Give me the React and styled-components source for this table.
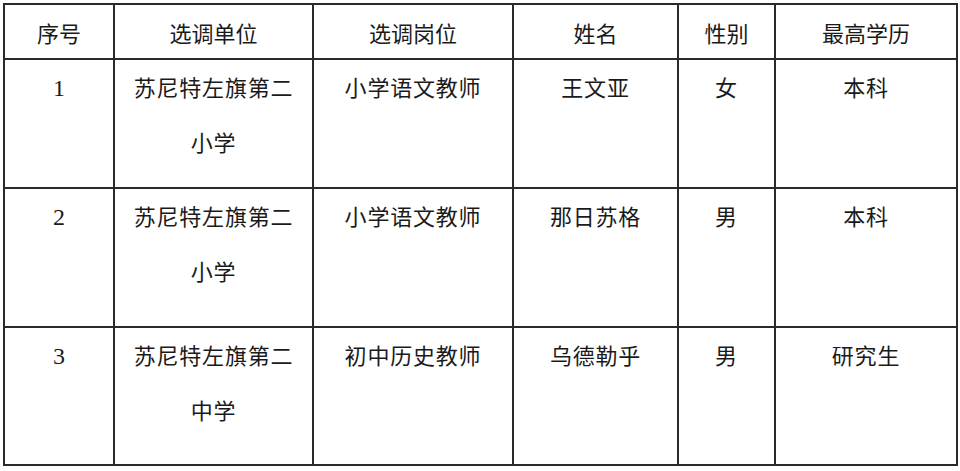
import React from 'react'
import styled, { createGlobalStyle } from 'styled-components'

const GlobalStyle = createGlobalStyle`
    html, body {
        margin: 0;
        padding: 0;
        background: #ffffff;
    }
    body {
        font-family: "Liberation Serif", "Noto Sans CJK SC", serif;
        color: #1a1a1a;
    }
`

const Page = styled.div`
    padding: 3px 0 0 3px;
`

const Table = styled.table`
    width: 954px;
    table-layout: fixed;
    border-collapse: collapse;
    border: 2px solid #2a2a2a;
`

const HeadCell = styled.th`
    height: 53px;
    border: 2px solid #2a2a2a;
    font-weight: 400;
    font-size: 22px;
    text-align: center;
    vertical-align: middle;
    padding: 0;
`

const Row = styled.tr`
    height: ${p => p.$h}px;
`

const Cell = styled.td`
    border: 2px solid #2a2a2a;
    font-size: ${p => (p.$num ? 24 : 22)}px;
    line-height: 55px;
    letter-spacing: ${p => (p.$num ? 0 : 0.8)}px;
    text-align: center;
    vertical-align: top;
    padding: 1px 8px 0;
`

const columns = [
    { title: '序号', width: 110 },
    { title: '选调单位', width: 199 },
    { title: '选调岗位', width: 200 },
    { title: '姓名', width: 165 },
    { title: '性别', width: 97 },
    { title: '最高学历', width: 182 },
]

const rows = [
    { no: '1', unit: '苏尼特左旗第二小学', post: '小学语文教师', name: '王文亚', sex: '女', edu: '本科', h: 129 },
    { no: '2', unit: '苏尼特左旗第二小学', post: '小学语文教师', name: '那日苏格', sex: '男', edu: '本科', h: 139 },
    { no: '3', unit: '苏尼特左旗第二中学', post: '初中历史教师', name: '乌德勒乎', sex: '男', edu: '研究生', h: 138 },
]

export default function App() {
    return (
        <Page>
            <GlobalStyle />
            <Table>
                <colgroup>
                    {columns.map(c => (
                        <col key={c.title} style={{ width: c.width }} />
                    ))}
                </colgroup>
                <thead>
                    <tr>
                        {columns.map(c => (
                            <HeadCell key={c.title}>{c.title}</HeadCell>
                        ))}
                    </tr>
                </thead>
                <tbody>
                    {rows.map(r => (
                        <Row key={r.no} $h={r.h}>
                            <Cell $num>{r.no}</Cell>
                            <Cell>{r.unit}</Cell>
                            <Cell>{r.post}</Cell>
                            <Cell>{r.name}</Cell>
                            <Cell>{r.sex}</Cell>
                            <Cell>{r.edu}</Cell>
                        </Row>
                    ))}
                </tbody>
            </Table>
        </Page>
    )
}
